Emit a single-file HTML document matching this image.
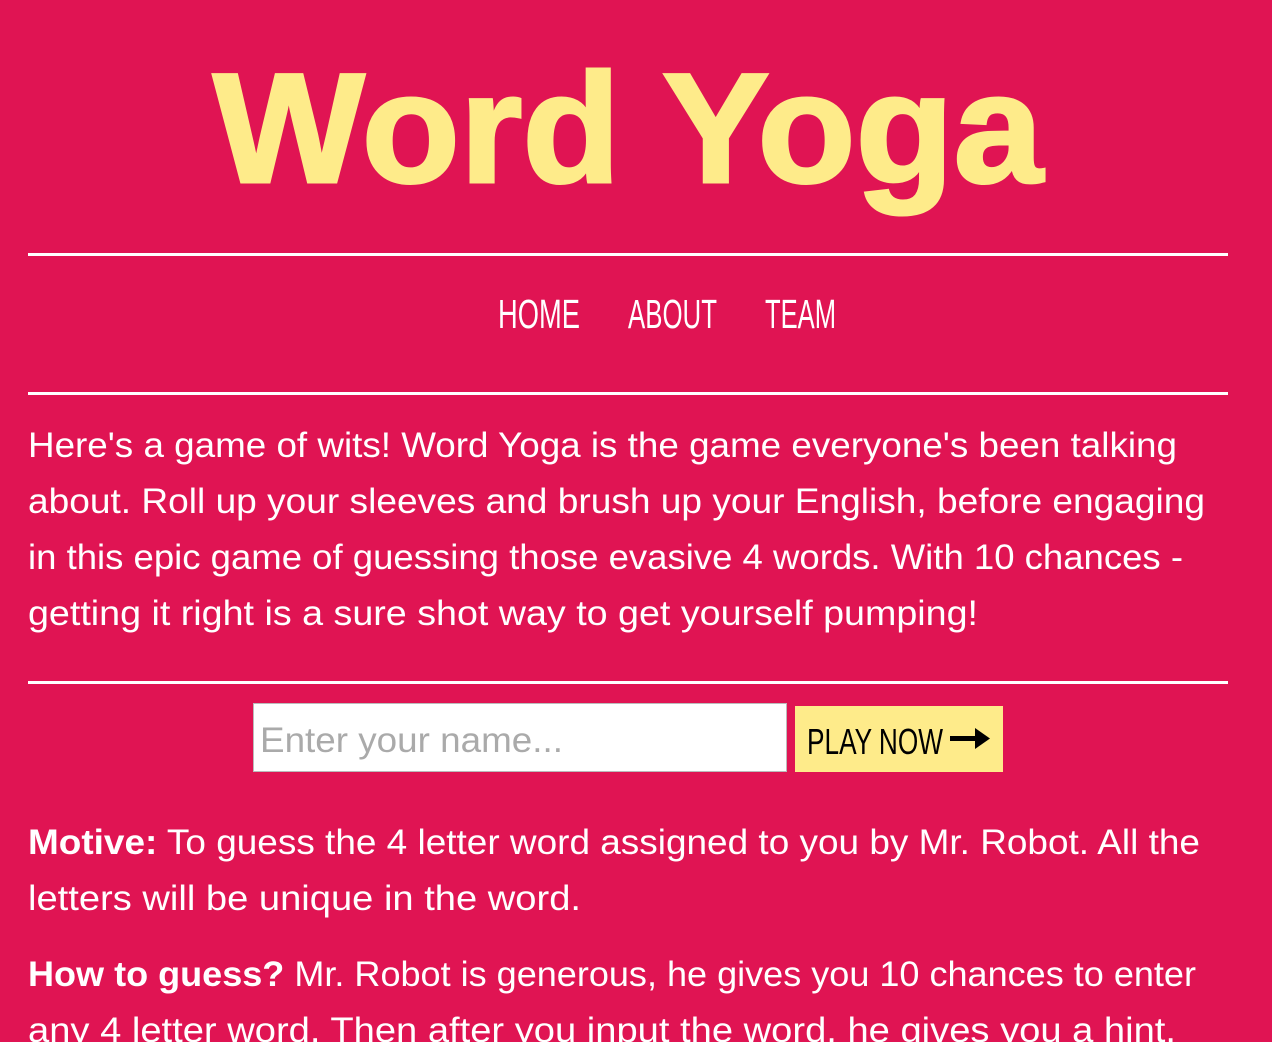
<!DOCTYPE html>
<html><head><meta charset="utf-8"><style>
html,body{margin:0;padding:0;background:#E01453;width:1272px;height:1042px;overflow:hidden}
svg{position:absolute;left:0;top:0}
</style></head><body>
<svg width="1272" height="1042" xmlns="http://www.w3.org/2000/svg" font-family="Liberation Sans, sans-serif">
<rect width="1272" height="1042" fill="#E01453"/>
<text x="213" y="182" font-size="156" font-weight="bold" fill="#FEEB8A" stroke="#FEEB8A" stroke-width="3" textLength="830" lengthAdjust="spacingAndGlyphs">Word Yoga</text>
<rect x="28" y="253" width="1200" height="3" fill="#fff"/>
<g fill="#fff" font-size="41">
<text x="498" y="328" textLength="82" lengthAdjust="spacingAndGlyphs">HOME</text>
<text x="628" y="328" textLength="89" lengthAdjust="spacingAndGlyphs">ABOUT</text>
<text x="765" y="328" textLength="71" lengthAdjust="spacingAndGlyphs">TEAM</text>
</g>
<rect x="28" y="392" width="1200" height="3" fill="#fff"/>
<g fill="#fff" font-size="35">
<text x="28" y="457" textLength="1149" lengthAdjust="spacingAndGlyphs">Here's a game of wits! Word Yoga is the game everyone's been talking</text>
<text x="28" y="513" textLength="1177" lengthAdjust="spacingAndGlyphs">about. Roll up your sleeves and brush up your English, before engaging</text>
<text x="28" y="569" textLength="1155" lengthAdjust="spacingAndGlyphs">in this epic game of guessing those evasive 4 words. With 10 chances -</text>
<text x="28" y="625" textLength="950" lengthAdjust="spacingAndGlyphs">getting it right is a sure shot way to get yourself pumping!</text>
</g>
<rect x="28" y="681" width="1200" height="3" fill="#fff"/>
<rect x="253.5" y="703.5" width="533" height="68" fill="#fff" stroke="#bbb" stroke-width="1"/>
<text x="260" y="752" font-size="35" fill="#aaa" textLength="303" lengthAdjust="spacingAndGlyphs">Enter your name...</text>
<rect x="795" y="706" width="208" height="66" fill="#FEEB8A"/>
<text x="807" y="754" font-size="36" fill="#000" textLength="136" lengthAdjust="spacingAndGlyphs">PLAY NOW</text>
<rect x="950" y="736" width="28" height="5" fill="#000"/>
<path d="M975 728 L990 738.5 L975 749 Z" fill="#000"/>
<g fill="#fff" font-size="35">
<text x="28" y="854" textLength="1172" lengthAdjust="spacingAndGlyphs"><tspan font-weight="bold">Motive:</tspan> To guess the 4 letter word assigned to you by Mr. Robot. All the</text>
<text x="28" y="910" textLength="553" lengthAdjust="spacingAndGlyphs">letters will be unique in the word.</text>
<text x="28" y="986" textLength="1168" lengthAdjust="spacingAndGlyphs"><tspan font-weight="bold">How to guess?</tspan> Mr. Robot is generous, he gives you 10 chances to enter</text>
<text x="28" y="1042" textLength="1148" lengthAdjust="spacingAndGlyphs">any 4 letter word. Then after you input the word, he gives you a hint.</text>
</g>
</svg>
</body></html>
